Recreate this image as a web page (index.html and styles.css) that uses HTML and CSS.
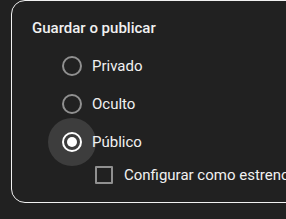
FILE: index.html
```html
<!DOCTYPE html>
<html lang="es">
    <head>
        <title>Visibilidad</title>
        <meta charset="utf-8">
        <link rel="stylesheet" href="styles.css">
    </head>
    <body>
        <div class="card">
            <div class="title">Guardar o publicar</div>
            <div class="option">
                <div class="radio"></div>
                <div class="label">Privado</div>
            </div>
            <div class="option">
                <div class="radio"></div>
                <div class="label">Oculto</div>
            </div>
            <div class="option checked">
                <div class="radio"><span class="ripple"></span><span class="dot"></span></div>
                <div class="label">Público</div>
            </div>
            <div class="premiere">
                <div class="box"></div>
                <div class="label">Configurar como estreno</div>
            </div>
        </div>
    </body>
</html>
```

FILE: styles.css
```css
body {
    margin: 0;
    background: #212121;
    font-family: Roboto, "Liberation Sans", sans-serif;
    color: #f1f1f1;
    overflow: hidden;
}
.card {
    margin-left: 11px;
    width: 320px;
    height: 203px;
    box-sizing: border-box;
    border: 1px solid #f1f1f1;
    border-radius: 14px;
    padding: 17px 0 0 20px;
}
.title {
    font-size: 15px;
    font-weight: 500;
    line-height: 20px;
    margin-bottom: 9px;
}
.option {
    display: flex;
    align-items: center;
    height: 38px;
    margin-left: 20px;
}
.radio {
    position: relative;
    width: 40px;
    height: 40px;
    display: flex;
    align-items: center;
    justify-content: center;
}
.radio::before {
    content: "";
    width: 20px;
    height: 20px;
    box-sizing: border-box;
    border: 2px solid #909090;
    border-radius: 50%;
    position: relative;
    z-index: 1;
}
.checked .radio::before {
    border-color: #fff;
}
.ripple {
    position: absolute;
    left: -4px;
    top: -4px;
    width: 48px;
    height: 48px;
    border-radius: 50%;
    background: #3d3d3d;
}
.dot {
    position: absolute;
    left: 15px;
    top: 15px;
    width: 10px;
    height: 10px;
    border-radius: 50%;
    background: #fff;
    z-index: 2;
}
.label {
    font-size: 15px;
    line-height: 20px;
    white-space: nowrap;
    position: relative;
    z-index: 3;
}
.premiere {
    display: flex;
    align-items: center;
    height: 28px;
    margin-left: 63px;
}
.box {
    width: 18px;
    height: 18px;
    box-sizing: border-box;
    border: 2px solid #909090;
    border-radius: 1px;
    margin-right: 11px;
}
```
